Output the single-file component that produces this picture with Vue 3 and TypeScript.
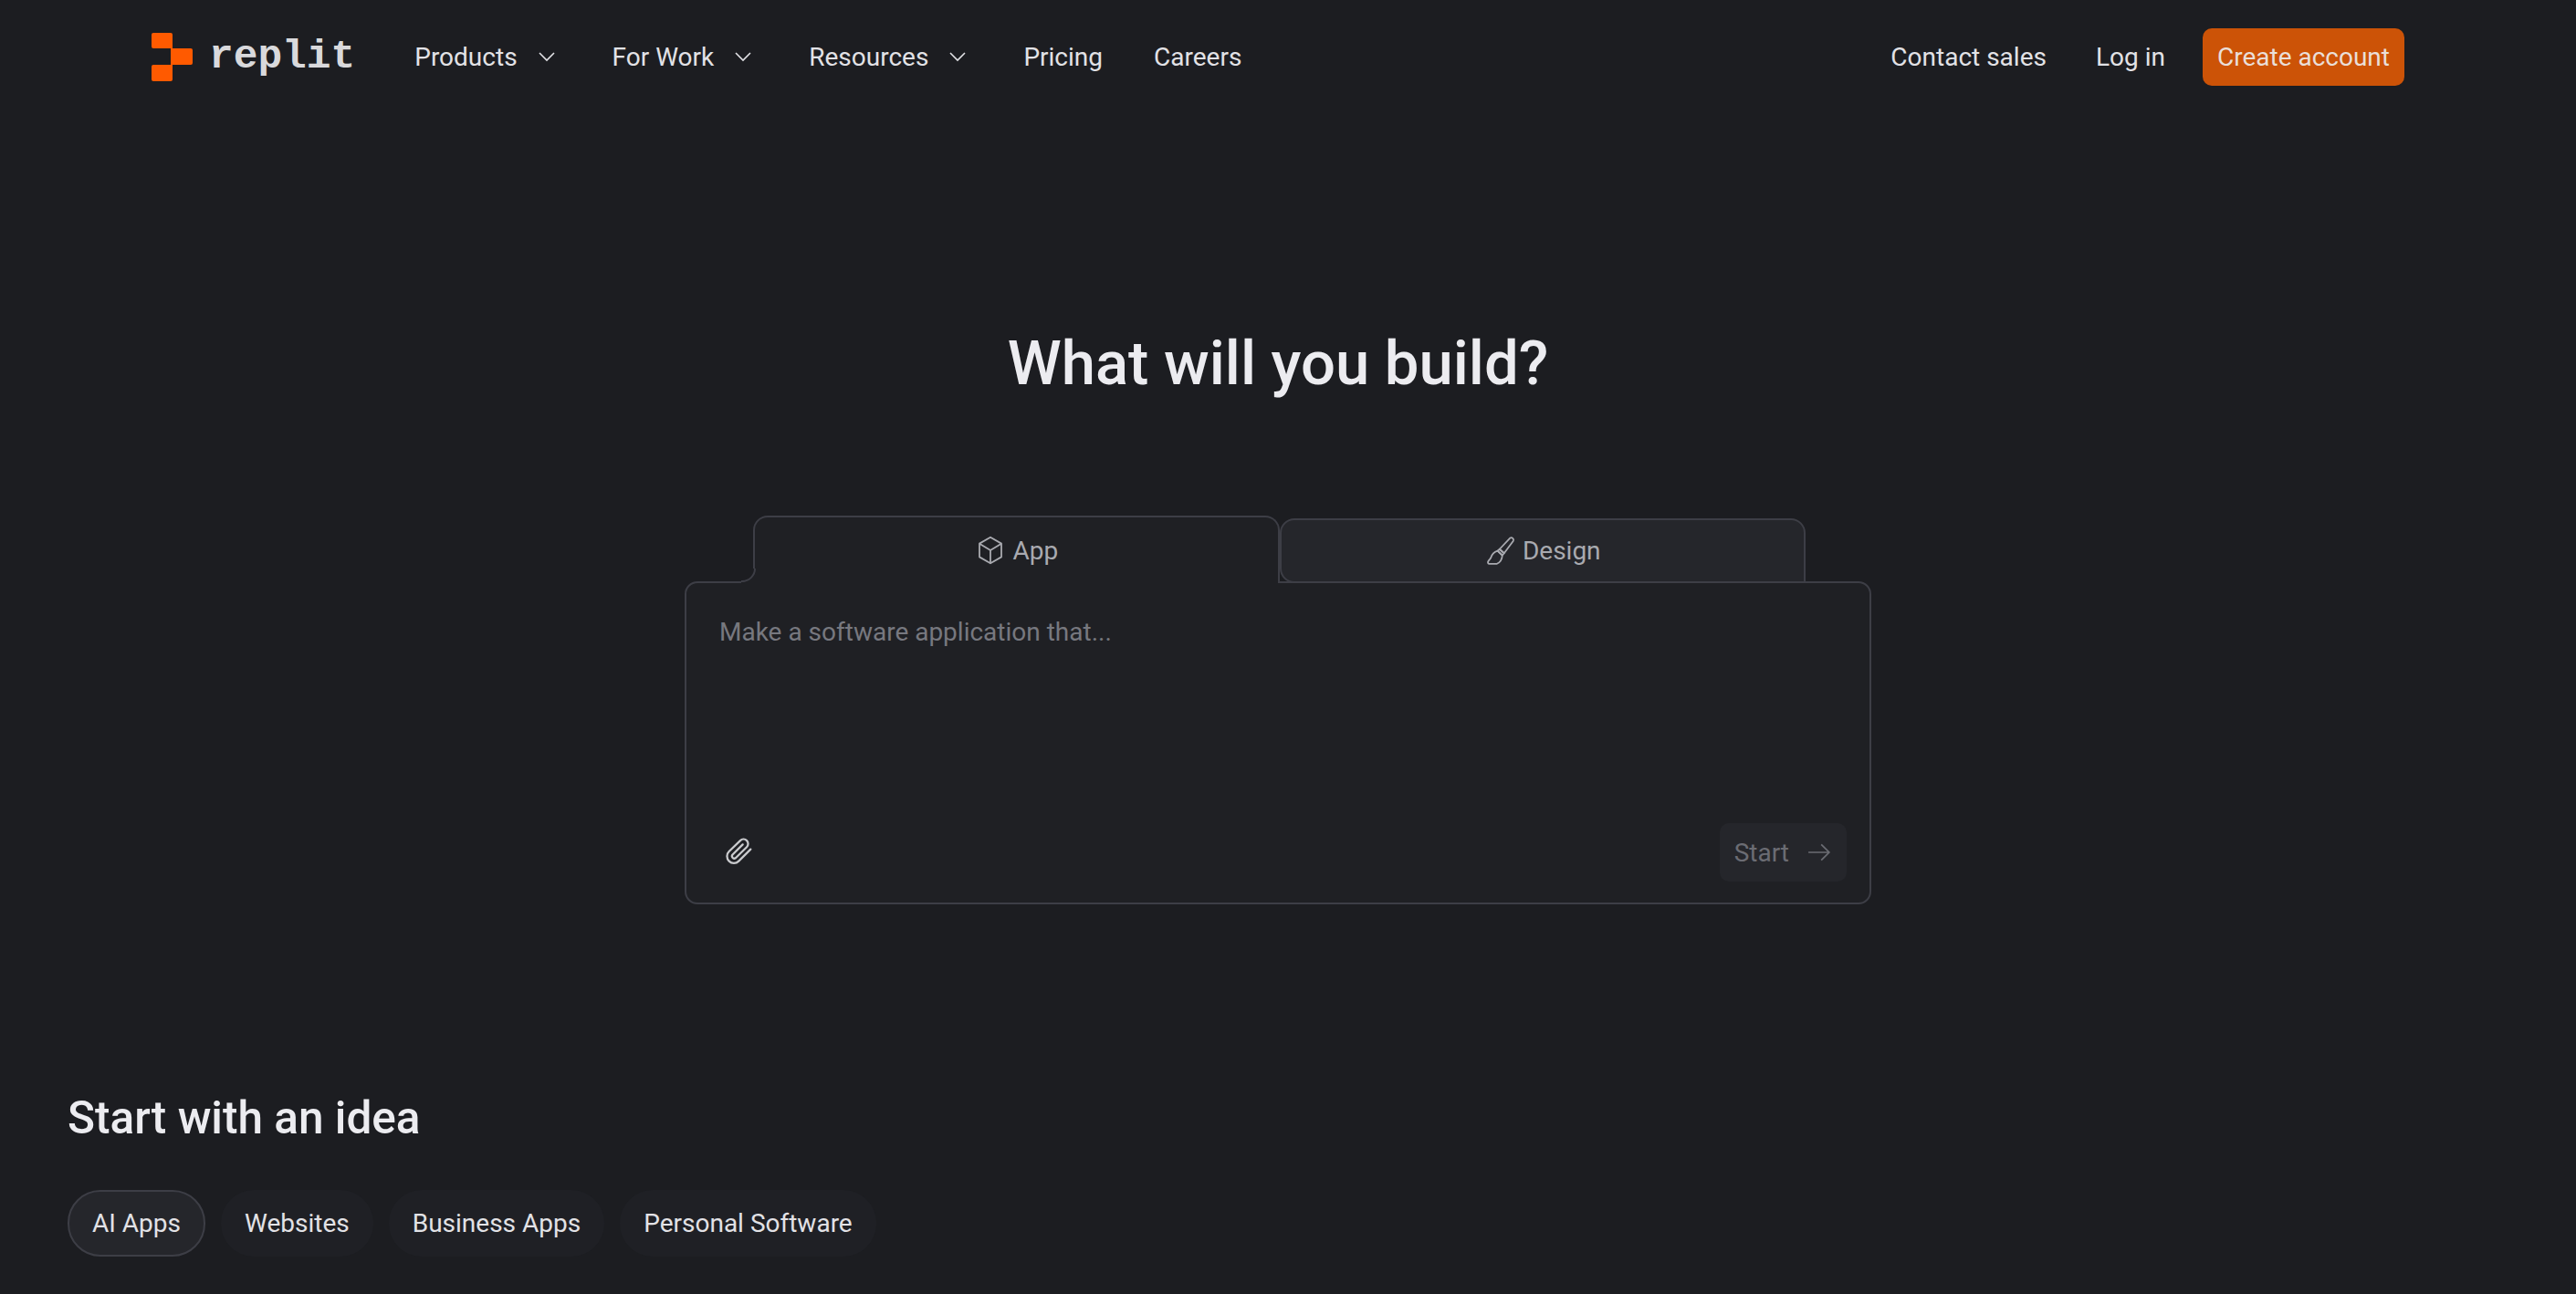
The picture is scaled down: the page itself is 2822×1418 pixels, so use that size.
<template>
  <div class="page">
    <header class="nav">
      <div class="brand">
        <svg class="logo" width="45" height="53" viewBox="0 0 45 53" aria-hidden="true">
          <path fill="#ff5a00" d="M2 0h19a2 2 0 0 1 2 2v15H2a2 2 0 0 1-2-2V2a2 2 0 0 1 2-2z" />
          <path fill="#ff5a00" d="M21 17h22a2 2 0 0 1 2 2v14a2 2 0 0 1-2 2H21z" />
          <path fill="#ff5a00" d="M2 35h21v16a2 2 0 0 1-2 2H2a2 2 0 0 1-2-2V37a2 2 0 0 1 2-2z" />
        </svg>
        <span class="wordmark">replit</span>
      </div>
      <nav class="links">
        <a v-for="item in navItems" :key="item.label" class="link" :class="{ caret: item.menu }">
          {{ item.label }}
          <svg v-if="item.menu" width="20" height="12" viewBox="0 0 20 12" fill="none" stroke="currentColor" stroke-width="1.6">
            <path d="M2 2l8 8 8-8" />
          </svg>
        </a>
      </nav>
      <div class="actions">
        <a class="link">Contact sales</a>
        <a class="link">Log in</a>
        <button class="cta">Create account</button>
      </div>
    </header>

    <main class="hero">
      <h1>What will you build?</h1>
      <div class="composer">
        <div class="tabs">
          <div class="tab active">
            <svg class="notch" width="16" height="16" viewBox="0 0 16 16" aria-hidden="true">
              <path fill="#1c1d21" d="M0 0h15A14 14 0 0 1 1 14H0z" />
              <path fill="#1f2024" d="M15 0h1v16H0v-1h1A15 15 0 0 0 15 0z" />
              <path fill="none" stroke="#3d3e46" stroke-width="2" d="M15 0A14 14 0 0 1 1 14H0" />
            </svg>
            <svg width="36" height="36" viewBox="0 0 24 24" fill="none" stroke="currentColor" stroke-width="1.2" stroke-linejoin="round">
              <path d="M12 2.500l8 4.600v9.800l-8 4.600-8-4.600V7.100z" />
              <path d="M4 7.100l8 4.900 8-4.900M12 12v9.500" />
            </svg>
            <span>App</span>
          </div>
          <div class="tab">
            <svg width="36" height="36" viewBox="0 0 24 24" fill="none" stroke="currentColor" stroke-width="1.2" stroke-linejoin="round" stroke-linecap="round">
              <path d="M19 2.300c1.200-.7 2.900.9 2.200 2.200L14.500 13.500l-3.300-3z" />
              <path d="M11.200 10.500l3.300 3-1.300 1.500-3.500-3.200z" />
              <path d="M9.700 11.800l3.500 3.200c-.2 2.800-1.700 5.200-3.900 6.200H3.500c-.8-.2-1-.9-.7-1.600.5-1 1.300-1.600 2-2.800.7-2.200 2.500-4.200 4.900-5z" />
            </svg>
            <span>Design</span>
          </div>
        </div>
        <div class="box">
          <div class="placeholder">Make a software application that...</div>
          <div class="box-foot">
            <svg class="clip" width="34" height="34" viewBox="0 0 24 24" fill="none" stroke="#c9cacd" stroke-width="1.600" stroke-linecap="round" stroke-linejoin="round">
              <path d="M21.400 8.900l-9.200 9.200a5.300 5.300 0 0 1-7.500-7.500l8.700-8.400a3.500 3.500 0 0 1 5 5l-8.600 8.500a1.800 1.800 0 0 1-2.500-2.500l8-8" />
            </svg>
            <button class="start">
              Start
              <svg width="26" height="26" viewBox="0 0 24 24" fill="none" stroke="currentColor" stroke-width="1.6">
                <path d="M1 12h21M14 4l8 8-8 8" />
              </svg>
            </button>
          </div>
        </div>
      </div>
    </main>

    <section class="ideas">
      <h2>Start with an idea</h2>
      <div class="chips">
        <span v-for="(chip, i) in chips" :key="chip" class="chip" :class="{ on: i === 0 }">{{ chip }}</span>
      </div>
    </section>
  </div>
</template>

<script setup lang="ts">
const navItems = [
  { label: 'Products', menu: true },
  { label: 'For Work', menu: true },
  { label: 'Resources', menu: true },
  { label: 'Pricing', menu: false },
  { label: 'Careers', menu: false }
]

const chips = ['AI Apps', 'Websites', 'Business Apps', 'Personal Software']
</script>

<style>
html, body {
  margin: 0;
  background: #1c1d21;
}
</style>

<style scoped>
.page {
  height: 1418px;
  overflow: hidden;
  background: #1c1d21;
  color: #e8e8ec;
  font-family: Roboto, "Noto Sans", sans-serif;
  font-size: 28px;
}

.nav {
  display: flex;
  align-items: center;
  height: 124px;
  padding: 0 188px 0 166px;
}

.brand {
  display: flex;
  align-items: center;
  gap: 18px;
  margin-right: 65px;
}

.logo { display: block; }

.wordmark {
  font-family: "Liberation Mono", monospace;
  font-size: 44.5px;
  font-weight: 700;
  color: #d9d9dc;
  line-height: 1;
}

.links {
  display: flex;
  align-items: center;
  gap: 56px;
}

.link {
  display: flex;
  align-items: center;
  gap: 22px;
  color: #e2e2e6;
  white-space: nowrap;
}

.link.caret { margin-right: 6px; }

.actions {
  display: flex;
  align-items: center;
  gap: 54px;
  margin-left: auto;
}

.cta {
  height: 63px;
  margin-left: -13px;
  padding: 0 16px;
  border: 0;
  border-radius: 10px;
  background: #cc5307;
  color: #eadfd8;
  font: inherit;
  white-space: nowrap;
}

.hero {
  display: flex;
  flex-direction: column;
  align-items: center;
  padding-right: 22px;
}

h1 {
  margin: 225px 0 0;
  font-size: 67px;
  line-height: 98px;
  font-weight: 500;
  color: #ececf0;
}

.composer {
  width: 1300px;
  margin-top: 118px;
}

.tabs {
  display: flex;
  align-items: flex-end;
  padding: 0 72px 0 75px;
  position: relative;
  z-index: 1;
  margin-bottom: -2px;
}

.tab {
  flex: 1;
  position: relative;
  box-sizing: border-box;
  display: flex;
  align-items: center;
  justify-content: center;
  gap: 6px;
  height: 71px;
  border: 2px solid #3d3e46;
  border-radius: 16px 16px 0 16px;
  background: #25262b;
  color: #a9aab0;
}

.tab.active {
  height: 74px;
  border-bottom: 0;
  border-radius: 16px 16px 0 0;
  background: #1f2024;
}

.notch {
  position: absolute;
  left: -15px;
  bottom: 0;
}

.box {
  box-sizing: border-box;
  display: flex;
  flex-direction: column;
  justify-content: space-between;
  height: 354px;
  padding: 35px 25px 23px 36px;
  border: 2px solid #3d3e46;
  border-radius: 14px;
  background: #1f2024;
}

.placeholder {
  color: #77787f;
  line-height: 38px;
}

.box-foot {
  display: flex;
  align-items: center;
  justify-content: space-between;
}

.clip {
  margin-left: 4px;
  margin-top: 2px;
}

.start {
  display: flex;
  align-items: center;
  gap: 20px;
  height: 64px;
  padding: 0 17px 0 16px;
  border: 0;
  border-radius: 10px;
  background: #25262b;
  color: #6b6c73;
  font: inherit;
}

.ideas {
  margin-top: 202px;
  padding-left: 74px;
}

h2 {
  margin: 0;
  font-size: 49.5px;
  line-height: 64px;
  font-weight: 500;
  color: #ececf0;
}

.chips {
  display: flex;
  gap: 17px;
  margin-top: 47px;
}

.chip {
  box-sizing: border-box;
  display: flex;
  align-items: center;
  height: 73px;
  padding: 0 26px;
  border-radius: 36px;
  background: #1f2025;
  color: #e2e2e6;
}

.chip.on {
  border: 2px solid #3d3e46;
  background: #25262b;
  padding: 0 25px;
}
</style>
